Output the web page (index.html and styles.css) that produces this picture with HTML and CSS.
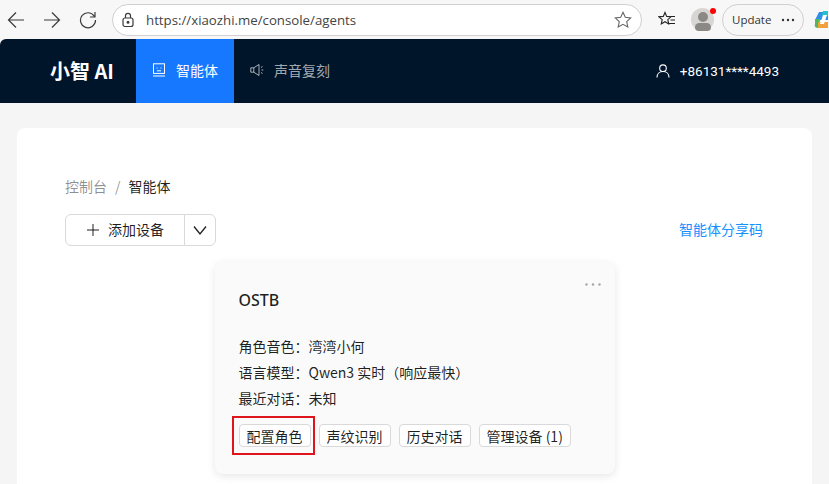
FILE: index.html
```html
<!DOCTYPE html>
<html lang="zh-CN">
<head>
  <meta charset="UTF-8">
  <title>小智 AI</title>
  <link rel="stylesheet" href="styles.css">
</head>
<body>

  <div class="browser-bar">
    <svg class="tool-icon back" width="18" height="18" viewBox="0 0 18 18"><path d="M17 9H1.500M9 1.500L1.500 9 9 16.500" /></svg>
    <svg class="tool-icon forward" width="18" height="18" viewBox="0 0 18 18"><path d="M1 9h15.500M9 1.500L16.500 9 9 16.500" /></svg>
    <svg class="tool-icon reload" width="18" height="18" viewBox="0 0 18 18"><path d="M15.500 5.500A7.500 7.500 0 1 0 16.500 9M16 1v5h-5" /></svg>
    <div class="address">
      <svg class="lock" width="14" height="16" viewBox="0 0 14 16"><rect x="2" y="6" width="10" height="8.500" rx="2" /><path d="M4.500 6V3.800a2.500 2.500 0 0 1 5 0V6" /><circle cx="7" cy="10.200" r="0.900" class="filled" /></svg>
      <span class="url">https://xiaozhi.me/console/agents</span>
      <svg class="star" width="18" height="18" viewBox="0 0 18 18"><path d="M9 1.300l2.300 5 5.400.6-4 3.700 1.100 5.400L9 13.300 4.200 16l1.100-5.400-4-3.700 5.400-.6z" /></svg>
    </div>
    <svg class="favorites" width="18" height="18" viewBox="0 0 18 18"><path d="M7 1.500l1.700 3.900 4.300.4-3.200 2.900.9 4.200L7 10.700l-3.700 2.200.9-4.200L1 5.800l4.300-.4zM13 5.500h4M12.500 9h4.500M11 12.500h6" /></svg>
    <div class="avatar">
      <span class="avatar-head"></span>
      <span class="avatar-body"></span>
      <span class="avatar-dot"></span>
    </div>
    <div class="update">
      Update
      <svg class="dots" width="14" height="4" viewBox="0 0 14 4"><circle cx="2" cy="2" r="1.200" /><circle cx="7" cy="2" r="1.200" /><circle cx="12" cy="2" r="1.200" /></svg>
    </div>
    <svg class="copilot" width="14" height="20" viewBox="0 0 14 20">
      <path d="M5 2h9v8H1z" fill="#2f8fe8" />
      <path d="M1 9h5l-1 9c-3 0-5-1-4-4z" fill="#4fb85a" />
      <path d="M4 12h10v6H4z" fill="#f0a13c" />
      <path d="M9 1h5v5H8z" fill="#22c3c9" />
      <path d="M9 5h4l-3 9H6z" fill="#ffffff" />
    </svg>
  </div>

  <div class="page">
    <header class="nav">
      <div class="logo">小智 AI</div>
      <a class="nav-item active">
        <svg width="14" height="14" viewBox="0 0 14 14"><rect x="1.500" y="0.800" width="11" height="9.600" /><path d="M1 13h12M4.500 5h1M8.500 5h1M5 7.800h4" /></svg>
        <span>智能体</span>
      </a>
      <a class="nav-item">
        <svg width="14" height="14" viewBox="0 0 14 14"><path d="M.800 4.800h3L9 1.500v11L3.800 9.200h-3zM3.800 4.800v4.400M11 4.500l1.500-1M11.500 7h1.800M11 9.500l1.500 1" /></svg>
        <span>声音复刻</span>
      </a>
      <div class="user">
        <svg width="14" height="14" viewBox="0 0 14 14"><circle cx="7" cy="4.200" r="3.300" /><path d="M1 13.500c0-3.500 2.500-6 6-6s6 2.500 6 6" /></svg>
        +86131****4493
      </div>
    </header>

    <main class="content">
      <div class="breadcrumb">
        <span class="crumb-link">控制台</span>
        <span class="crumb-sep">/</span>
        <span>智能体</span>
      </div>

      <div class="toolbar">
        <div class="btn-group">
          <button class="btn-add" type="button">
            <svg width="14" height="14" viewBox="0 0 14 14"><path d="M7 1v12M1 7h12" /></svg>
            <span>添加设备</span>
          </button>
          <button class="btn-more" type="button">
            <svg width="14" height="14" viewBox="0 0 14 14"><path d="M1 3.500l6 7.500 6-7.500" /></svg>
          </button>
        </div>
        <a class="share-link">智能体分享码</a>
      </div>

      <div class="agent-card">
        <svg class="card-menu" width="16" height="3" viewBox="0 0 16 3"><circle cx="1.500" cy="1.500" r="1.200" /><circle cx="8" cy="1.500" r="1.200" /><circle cx="14.500" cy="1.500" r="1.200" /></svg>
        <div class="agent-name">OSTB</div>
        <div class="agent-info">
          <p>角色音色：湾湾小何</p>
          <p>语言模型：Qwen3 实时（响应最快）</p>
          <p>最近对话：未知</p>
        </div>
        <div class="agent-actions">
          <button type="button" class="marked">配置角色</button>
          <button type="button">声纹识别</button>
          <button type="button">历史对话</button>
          <button type="button">管理设备 (1)</button>
        </div>
      </div>
    </main>
  </div>

</body>
</html>
```

FILE: styles.css
```css
* {
  box-sizing: border-box;
}
html, body {
  margin: 0;
  height: 100%;
  overflow: hidden;
}
body {
  display: flex;
  flex-direction: column;
  font-family: "Noto Sans CJK SC", "Noto Sans", sans-serif;
  font-size: 14px;
  color: rgba(0, 0, 0, 0.88);
  background-color: #f5f5f5;
}
svg {
  fill: none;
  stroke: currentColor;
  flex-shrink: 0;
}

.browser-bar {
  display: flex;
  align-items: center;
  flex-shrink: 0;
  height: 39px;
  padding: 0 0 0 7px;
  background-color: #f7f7f7;
  color: #3b3b3b;
}
.tool-icon {
  stroke-width: 1.2;
}
.back {
  margin-right: 18px;
}
.forward {
  margin-right: 18px;
}
.reload {
  margin-right: 15px;
}
.address {
  display: flex;
  align-items: center;
  width: 530px;
  height: 32px;
  padding: 0 9px 0 8px;
  background-color: #fff;
  border: 1px solid #d0d0d0;
  border-radius: 16px;
}
.lock {
  stroke-width: 1.2;
  margin-right: 11px;
}
.lock .filled {
  fill: currentColor;
}
.url {
  flex: 1;
  font-family: "Open Sans", sans-serif;
  font-size: 13.250px;
  color: #444;
}
.star {
  stroke: #666;
  stroke-width: 1.1;
}
.favorites {
  margin-left: 16px;
  stroke-width: 1.1;
  color: #222;
}
.avatar {
  position: relative;
  width: 23px;
  height: 23px;
  margin-left: 15px;
  border-radius: 50%;
  background-color: #d8d6d3;
}
.avatar-head {
  position: absolute;
  top: 4px;
  left: 7px;
  width: 10px;
  height: 10px;
  border-radius: 50%;
  background-color: #8b8985;
}
.avatar-body {
  position: absolute;
  bottom: 0;
  left: 4px;
  width: 16px;
  height: 8px;
  border-radius: 8px 8px 7px 7px;
  background-color: #8b8985;
}
.avatar-dot {
  position: absolute;
  top: 0;
  right: -2px;
  width: 6px;
  height: 6px;
  border-radius: 50%;
  background-color: #f00;
}
.update {
  display: flex;
  align-items: center;
  justify-content: space-between;
  width: 82px;
  height: 32px;
  margin-left: 8px;
  padding: 0 8px 0 9px;
  font-family: "Open Sans", sans-serif;
  font-size: 11.500px;
  color: #333;
  border: 1px solid #d0d0d0;
  border-radius: 16px;
}
.dots {
  fill: #333;
  stroke: none;
}
.copilot {
  margin-left: 10px;
  stroke: none;
}

.page {
  display: flex;
  flex-direction: column;
  flex: 1;
  min-height: 0;
}
.nav {
  display: flex;
  align-items: stretch;
  flex-shrink: 0;
  height: 64px;
  background-color: #001529;
  border-radius: 6px 0 0 0;
  color: #fff;
}
.logo {
  width: 136px;
  padding-left: 50px;
  line-height: 64px;
  font-family: "Noto Sans CJK SC", sans-serif;
  font-size: 20px;
  font-weight: bold;
  white-space: nowrap;
}
.nav-item {
  display: flex;
  align-items: center;
  gap: 10px;
  padding: 0 16px;
  color: rgba(255, 255, 255, 0.65);
}
.nav-item span {
  margin-top: -2px;
}
.nav-item svg {
  stroke-width: 1;
  margin-top: -3px;
}
.nav-item.active {
  width: 98px;
  color: #fff;
  background-color: #1677ff;
}
.user {
  display: flex;
  align-items: center;
  gap: 10px;
  margin-left: auto;
  padding-right: 50px;
  font-family: "Roboto", sans-serif;
  font-size: 13.500px;
}
.user svg {
  stroke-width: 1.1;
}

.content {
  flex: 1;
  margin: 25px 17px 0;
  padding: 47px 48px 0;
  background-color: #fff;
  border-radius: 8px 8px 0 0;
}
.breadcrumb {
  display: flex;
  gap: 8px;
  height: 22px;
  line-height: 22px;
}
.crumb-link, .crumb-sep {
  color: rgba(0, 0, 0, 0.45);
}
.toolbar {
  display: flex;
  align-items: center;
  justify-content: space-between;
  margin-top: 17px;
}
.btn-group {
  display: flex;
}
.btn-group button {
  height: 32px;
  padding: 0;
  background-color: #fff;
  border: 1px solid #d9d9d9;
  font-family: inherit;
  font-size: 14px;
  color: rgba(0, 0, 0, 0.88);
  display: flex;
  align-items: center;
  justify-content: center;
}
.btn-add {
  gap: 8px;
  width: 120px;
  border-radius: 6px 0 0 6px;
}
.btn-add span {
  margin-top: -2px;
}
.btn-more {
  width: 32px;
  margin-left: -1px;
  border-radius: 0 6px 6px 0;
}
.btn-more svg {
  stroke-width: 1.300;
}
.share-link {
  padding: 0 1px 3px 0;
  color: #1890ff;
}

.agent-card {
  position: relative;
  width: 400px;
  height: 212px;
  margin: 16px auto 0;
  padding: 24px;
  background-color: #fafafa;
  border-radius: 8px;
  box-shadow: 0 2px 8px rgba(0, 0, 0, 0.1);
}
.card-menu {
  position: absolute;
  top: 21px;
  right: 14px;
  fill: #a6a6a6;
  stroke: none;
}
.agent-name {
  height: 24px;
  font-family: "Noto Sans", sans-serif;
  font-size: 16px;
  font-weight: 500;
  line-height: 28px;
}
.agent-info {
  margin-top: 23px;
}
.agent-info p {
  margin: 0;
  height: 26px;
  line-height: 26px;
  font-size: 14px;
}
.agent-actions {
  display: flex;
  gap: 8px;
  margin-top: 13px;
}
.agent-actions button {
  position: relative;
  height: 23px;
  padding: 0 7px;
  font-family: inherit;
  font-size: 14px;
  color: rgba(0, 0, 0, 0.88);
  background-color: #fff;
  border: 1px solid #d9d9d9;
  border-radius: 4px;
}
.marked::after {
  content: "";
  position: absolute;
  top: -9px;
  left: -8px;
  right: -5px;
  bottom: -9px;
  border: 2px solid #e0141b;
}
```
